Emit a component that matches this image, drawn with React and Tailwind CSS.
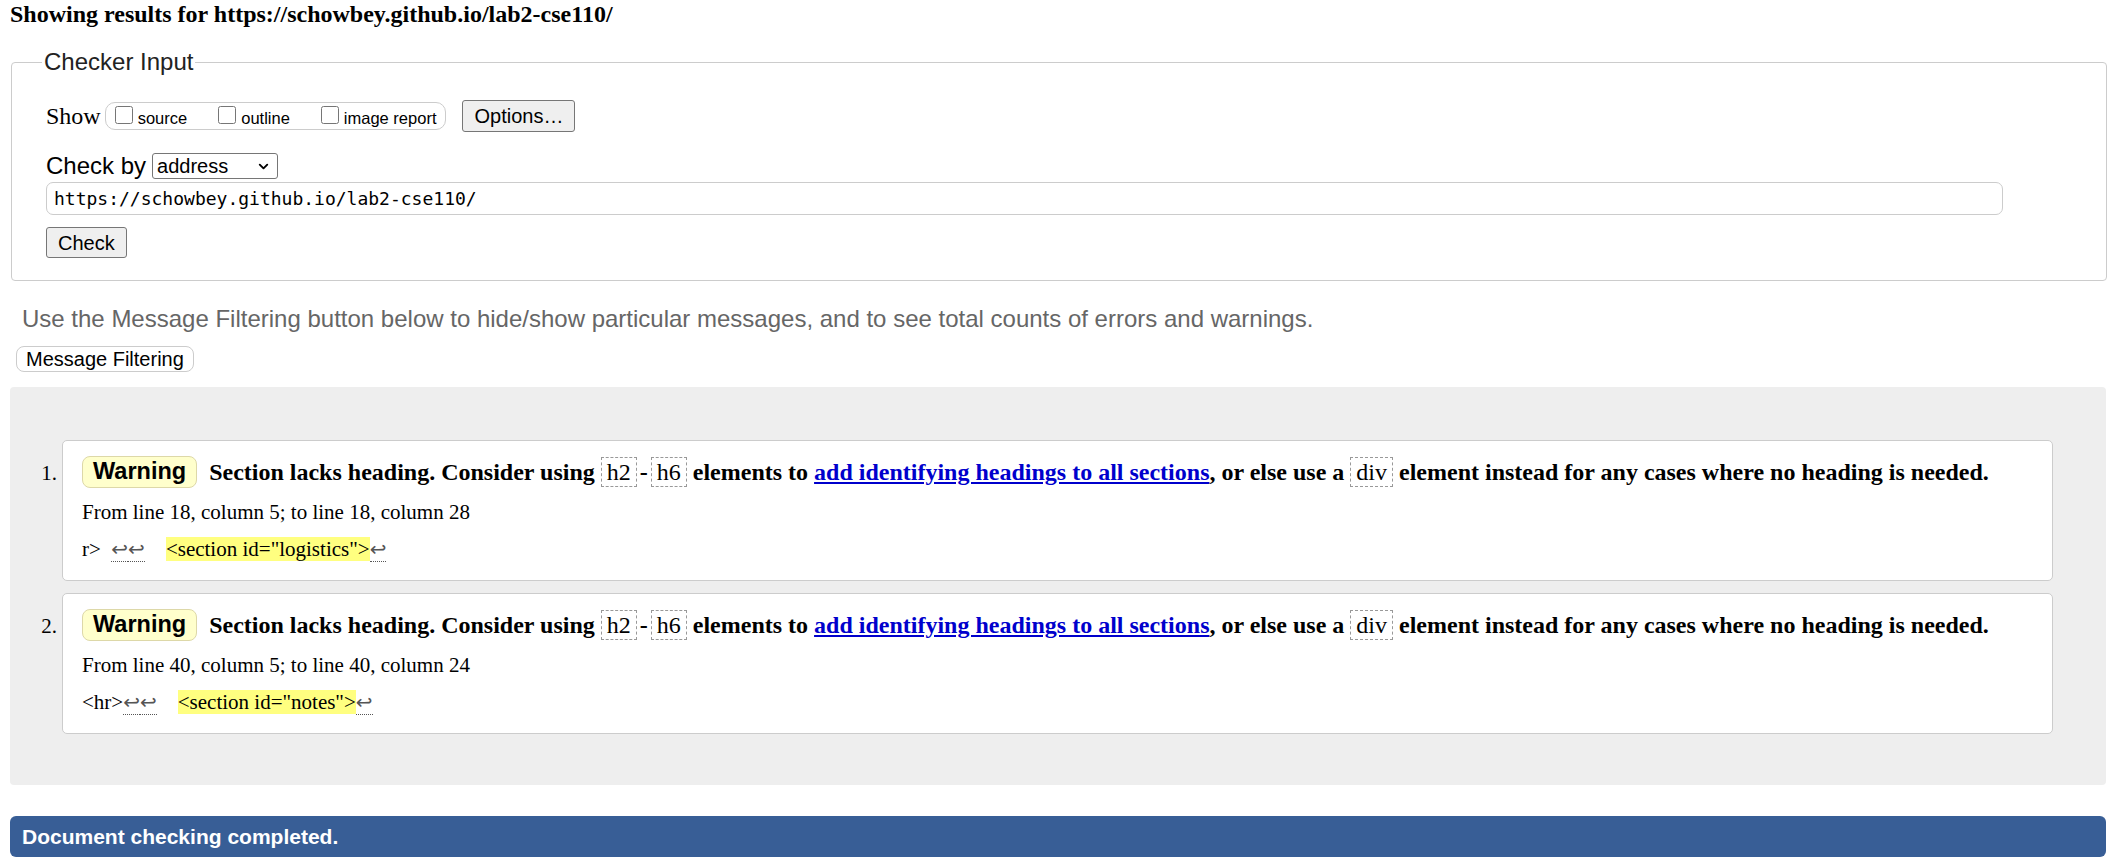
import { ChevronDown } from "lucide-react";

const messages = [
  {
    n: "1.",
    from: "From line 18, column 5; to line 18, column 28",
    pre: "r>  ",
    code: '<section id="logistics">',
  },
  {
    n: "2.",
    from: "From line 40, column 5; to line 40, column 24",
    pre: "<hr>",
    code: '<section id="notes">',
  },
];

function Code({ children }) {
  return (
    <span className="inline-block border border-dashed border-[#999] px-[5px] leading-[28px] font-normal">
      {children}
    </span>
  );
}

function Ret() {
  return <span className="border-b border-dotted border-[#555] text-[#555] font-['DejaVu_Sans',sans-serif] text-[20px]">↩</span>;
}

function Message({ m }) {
  return (
    <li className="flex items-start">
      <span className="w-[52px] shrink-0 pr-[5px] pt-[21px] text-right text-[21px] leading-[24px] font-['Liberation_Serif','Times_New_Roman',serif]">
        {m.n}
      </span>
      <div className="flex-1 rounded-[5px] border border-[#ccc] bg-white pl-[19px] pt-[15px] pb-[19px] font-['Liberation_Serif','Times_New_Roman',serif]">
        <div className="flex h-[32px] items-center">
          <span className="flex h-[32px] items-center rounded-[8px] border border-[#ddd8a8] bg-[#ffffcc] px-[10px] font-['Liberation_Sans',Arial,sans-serif] text-[23.5px] font-bold">
            Warning
          </span>
          <span className="ml-[12px] whitespace-nowrap text-[24px] font-bold leading-[32px]">
            Section lacks heading. Consider using <Code>h2</Code>
            <span className="mx-[3px]">-</span>
            <Code>h6</Code> elements to{" "}
            <a href="#" className="text-[#0000cc] underline">
              add identifying headings to all sections
            </a>
            , or else use a <Code>div</Code> element instead for any cases where no heading is needed.
          </span>
        </div>
        <p className="mt-[12px] h-[24px] text-[21px] leading-[24px]">{m.from}</p>
        <p className="mt-[13px] h-[24px] whitespace-pre text-[21px] leading-[24px]">
          {m.pre}
          <Ret />
          <Ret />
          {"    "}
          <span className="bg-[#ffff80]">{m.code}</span>
          <Ret />
        </p>
      </div>
    </li>
  );
}

export default function App() {
  return (
    <div className="min-h-screen bg-white text-black font-['Liberation_Sans',Arial,sans-serif]">
      <h2 className="h-[28px] pl-[10px] text-[24px] leading-[28px] font-bold font-['Liberation_Serif','Times_New_Roman',serif]">
        Showing results for https://schowbey.github.io/lab2-cse110/
      </h2>

      <fieldset className="ml-[11px] mr-[9px] mt-[20px] rounded-[4px] border border-[#ccc] pl-[34px] pb-[22px]">
        <legend className="ml-[-4px] px-[2px] text-[24px] leading-[28px] text-[#222]">Checker Input</legend>

        <div className="mt-[24px] flex h-[32px] items-center">
          <span className="mr-[4px] text-[24px] font-['Liberation_Serif','Times_New_Roman',serif]">Show</span>
          <div className="flex h-[28px] items-center rounded-[10px] border border-[#ccc] px-[9px]">
            <label className="flex items-baseline">
              <input type="checkbox" className="h-[18px] w-[18px]" />
              <span className="ml-[5px] text-[16.5px] leading-[18px]">source</span>
            </label>
            <label className="ml-[31px] flex items-baseline">
              <input type="checkbox" className="h-[18px] w-[18px]" />
              <span className="ml-[5px] text-[16.5px] leading-[18px]">outline</span>
            </label>
            <label className="ml-[31px] flex items-baseline">
              <input type="checkbox" className="h-[18px] w-[18px]" />
              <span className="ml-[5px] text-[16.5px] leading-[18px]">image report</span>
            </label>
          </div>
          <button className="ml-[16px] h-[32px] rounded-[3px] border border-[#767676] bg-[#efefef] px-[11px] text-[20px]">
            Options…
          </button>
        </div>

        <div className="mt-[21px] flex h-[26px] items-center">
          <span className="text-[24px]">Check by</span>
          <div className="ml-[6px] flex h-[26px] w-[126px] items-center justify-between rounded-[3px] border border-[#767676] pl-[4px] pr-[6px]">
            <span className="text-[20px]">address</span>
            <ChevronDown size={15} strokeWidth={3} />
          </div>
        </div>

        <div className="mt-[3px] flex h-[33px] w-[1957px] items-center rounded-[7px] border border-[#ccc] px-[7px] font-['DejaVu_Sans_Mono','Liberation_Mono',monospace] text-[18px]">
          https://schowbey.github.io/lab2-cse110/
        </div>

        <button className="mt-[12px] h-[31px] rounded-[3px] border border-[#767676] bg-[#efefef] px-[11px] text-[20px]">
          Check
        </button>
      </fieldset>

      <p className="ml-[22px] mt-[24px] text-[24px] leading-[28px] text-[#666]">
        Use the Message Filtering button below to hide/show particular messages, and to see total counts of errors and warnings.
      </p>

      <button className="ml-[16px] mt-[13px] h-[26px] rounded-[8px] border border-[#ccc] bg-white px-[9px] text-[20px] leading-[24px]">
        Message Filtering
      </button>

      <div className="mx-[10px] mt-[14px] rounded-[4px] bg-[#eeeeee] pt-[53px] pb-[51px] pr-[53px]">
        <ol className="flex flex-col gap-[12px]">
          {messages.map((m) => (
            <Message key={m.n} m={m} />
          ))}
        </ol>
      </div>

      <div className="mx-[10px] mt-[31px] flex h-[41px] items-center rounded-[6px] bg-[#385e96] pl-[12px] text-[21px] font-bold text-white">
        Document checking completed.
      </div>
    </div>
  );
}
